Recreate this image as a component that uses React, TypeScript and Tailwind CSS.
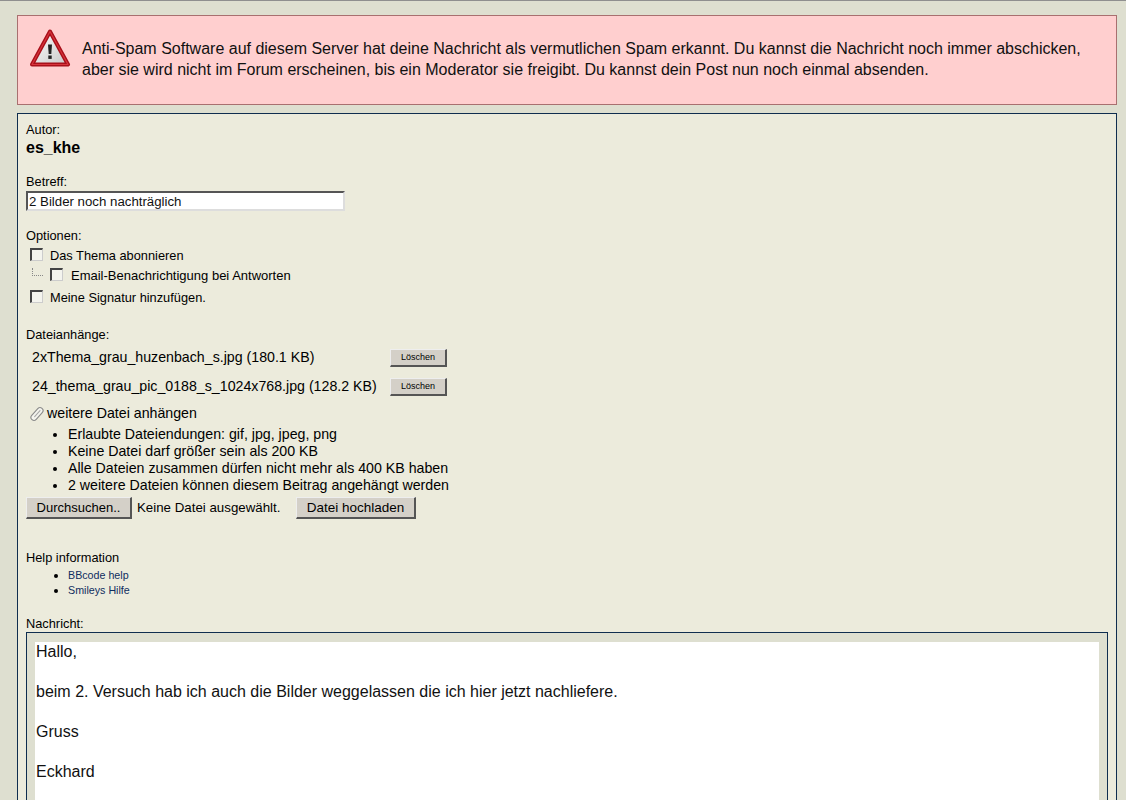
const checkbox = "appearance-none block w-[13px] h-[13px] mb-[2px] shrink-0 bg-[#f4f4ee] border border-t-[2px] border-l-[2px] border-t-[#444] border-l-[#444] border-r-[#ccc] border-b-[#ccc]"
const button = "bg-[#d4d0c8] text-black border border-t-[#eee] border-l-[#eee] border-r-[2px] border-b-[2px] border-r-[#555] border-b-[#555]"
const label = "text-[12.8px] leading-[15px]"

const dateien = [
  { name: '2xThema_grau_huzenbach_s.jpg (180.1 KB)' },
  { name: '24_thema_grau_pic_0188_s_1024x768.jpg (128.2 KB)' },
]

const regeln = [
  'Erlaubte Dateiendungen: gif, jpg, jpeg, png',
  'Keine Datei darf größer sein als 200 KB',
  'Alle Dateien zusammen dürfen nicht mehr als 400 KB haben',
  '2 weitere Dateien können diesem Beitrag angehängt werden',
]

function WarnIcon() {
  return (
    <svg width="42" height="40" viewBox="0 0 42 40" className="shrink-0">
      <defs>
        <linearGradient id="warnfill" x1="0" y1="0" x2="1" y2="1">
          <stop offset="0" stopColor="#ffffff" />
          <stop offset="1" stopColor="#c8c8c8" />
        </linearGradient>
      </defs>
      <path d="M20 2.5 L38 35.5 L2 35.5 Z" fill="url(#warnfill)" stroke="#a8101a" strokeWidth="4" strokeLinejoin="round" />
      <path d="M20 2.5 L38 35.5 L2 35.5 Z" fill="none" stroke="#d8343c" strokeWidth="1.2" strokeLinejoin="round" />
      <path d="M18 15.5 h4 l-0.7 9.5 h-2.6 Z" fill="#222" />
      <rect x="18.3" y="26.5" width="3.4" height="3.4" fill="#222" />
    </svg>
  )
}

function Clip() {
  return (
    <svg width="16" height="16" viewBox="0 0 16 16" className="shrink-0" fill="none">
      <g transform="rotate(42 8 8)">
        <rect x="5" y="0.5" width="6" height="15" rx="3" fill="#f4f4ee" stroke="#8a8a8a" strokeWidth="1.1" />
        <path d="M8 3.5 V11.5" stroke="#a8a8a8" strokeWidth="1.1" strokeLinecap="round" />
      </g>
    </svg>
  )
}

export default function App() {
  return (
    <div className="h-[800px] overflow-hidden bg-[#dedfd0] border-t border-t-[#8f8f8f] pl-[17px] pr-[9px] pt-[14px] text-black font-['Liberation_Sans',Arial,sans-serif]">
      <div className="h-[90px] bg-[#ffcfcf] border border-[#a87070] flex items-start pl-[12px] pt-[13px] gap-[10px]">
        <WarnIcon />
        <p className="text-[16px] leading-[21px] pt-[9px] w-[1020px] text-[#111]">
          Anti-Spam Software auf diesem Server hat deine Nachricht als vermutlichen Spam erkannt. Du kannst die Nachricht noch immer abschicken, aber sie wird nicht im Forum erscheinen, bis ein Moderator sie freigibt. Du kannst dein Post nun noch einmal absenden.
        </p>
      </div>

      <div className="mt-[8px] bg-[#ecebdc] border border-[#0f2d4f] px-[8px] pt-[8px] h-[800px]">
        <div className="text-[12.8px] leading-[16px]">Autor:</div>
        <div className="text-[16px] leading-[20px] font-bold">es_khe</div>

        <div className={label + " mt-[16px]"}>Betreff:</div>
        <div className="mt-[2px] w-[319px] h-[20px] bg-white border-2 border-t-[#555] border-l-[#555] border-r-[#ddd] border-b-[#ddd] text-[13.25px] leading-[17px] pl-[1px] text-[#111]">
          2 Bilder noch nachträglich
        </div>

        <div className={label + " mt-[17px]"}>Optionen:</div>
        <label className="flex items-center mt-[4px] h-[17px] pl-[4px] text-[12.8px]">
          <input type="checkbox" className={checkbox} />
          <span className="ml-[7px]">Das Thema abonnieren</span>
        </label>
        <label className="flex items-center mt-[3px] h-[17px] pl-[6px] text-[13px]">
          <span className="w-[11px] h-[8px] mb-[8px] mr-[7px] border-l border-b border-dotted border-[#888]" />
          <input type="checkbox" className={checkbox} />
          <span className="ml-[8px]">Email-Benachrichtigung bei Antworten</span>
        </label>
        <label className="flex items-center mt-[5px] h-[17px] pl-[4px] text-[12.8px]">
          <input type="checkbox" className={checkbox} />
          <span className="ml-[7px]">Meine Signatur hinzufügen.</span>
        </label>

        <div className={label + " mt-[21px]"}>Dateianhänge:</div>
        <div className="mt-[6px] flex flex-col gap-[9px]">
          {dateien.map((d) => (
            <div key={d.name} className="flex items-center h-[20px] pl-[6px] text-[14.2px]">
              <span className="w-[358px]">{d.name}</span>
              <button className={button + " w-[57px] h-[18px] text-[9px] leading-none"}>Löschen</button>
            </div>
          ))}
        </div>

        <div className="flex items-center gap-[2px] mt-[8px] pl-[3px] h-[18px] text-[14.2px]">
          <Clip />
          <span>weitere Datei anhängen</span>
        </div>
        <ul className="list-disc pl-[42px] mt-[3px] text-[14.2px] leading-[17px]">
          {regeln.map((r) => <li key={r}>{r}</li>)}
        </ul>
        <div className="flex items-center mt-[3px] text-[13.3px]">
          <button className={button + " w-[106px] h-[22px] text-[13px]"}>Durchsuchen..</button>
          <span className="ml-[5px] w-[159px]">Keine Datei ausgewählt.</span>
          <button className={button + " w-[120px] h-[22px] text-[13.5px]"}>Datei hochladen</button>
        </div>

        <div className={label + " mt-[31px]"}>Help information</div>
        <ul className="list-disc pl-[42px] mt-[3px] text-[10.7px] leading-[15px] text-[#0f2d5f] marker:text-black marker:text-[12px]">
          <li>BBcode help</li>
          <li>Smileys Hilfe</li>
        </ul>

        <div className={label + " mt-[18px]"}>Nachricht:</div>
        <div className="mt-[1px] h-[300px] border border-[#0f2d4f] bg-[#dedfd0] px-[8px] pt-[9px]">
          <div className="bg-white h-full pl-[1px] text-[16px] leading-[20px] text-[#111]">
            <p>Hallo,</p>
            <p className="mt-[20px]">beim 2. Versuch hab ich auch die Bilder weggelassen die ich hier jetzt nachliefere.</p>
            <p className="mt-[20px]">Gruss</p>
            <p className="mt-[20px]">Eckhard</p>
          </div>
        </div>
      </div>
    </div>
  )
}
